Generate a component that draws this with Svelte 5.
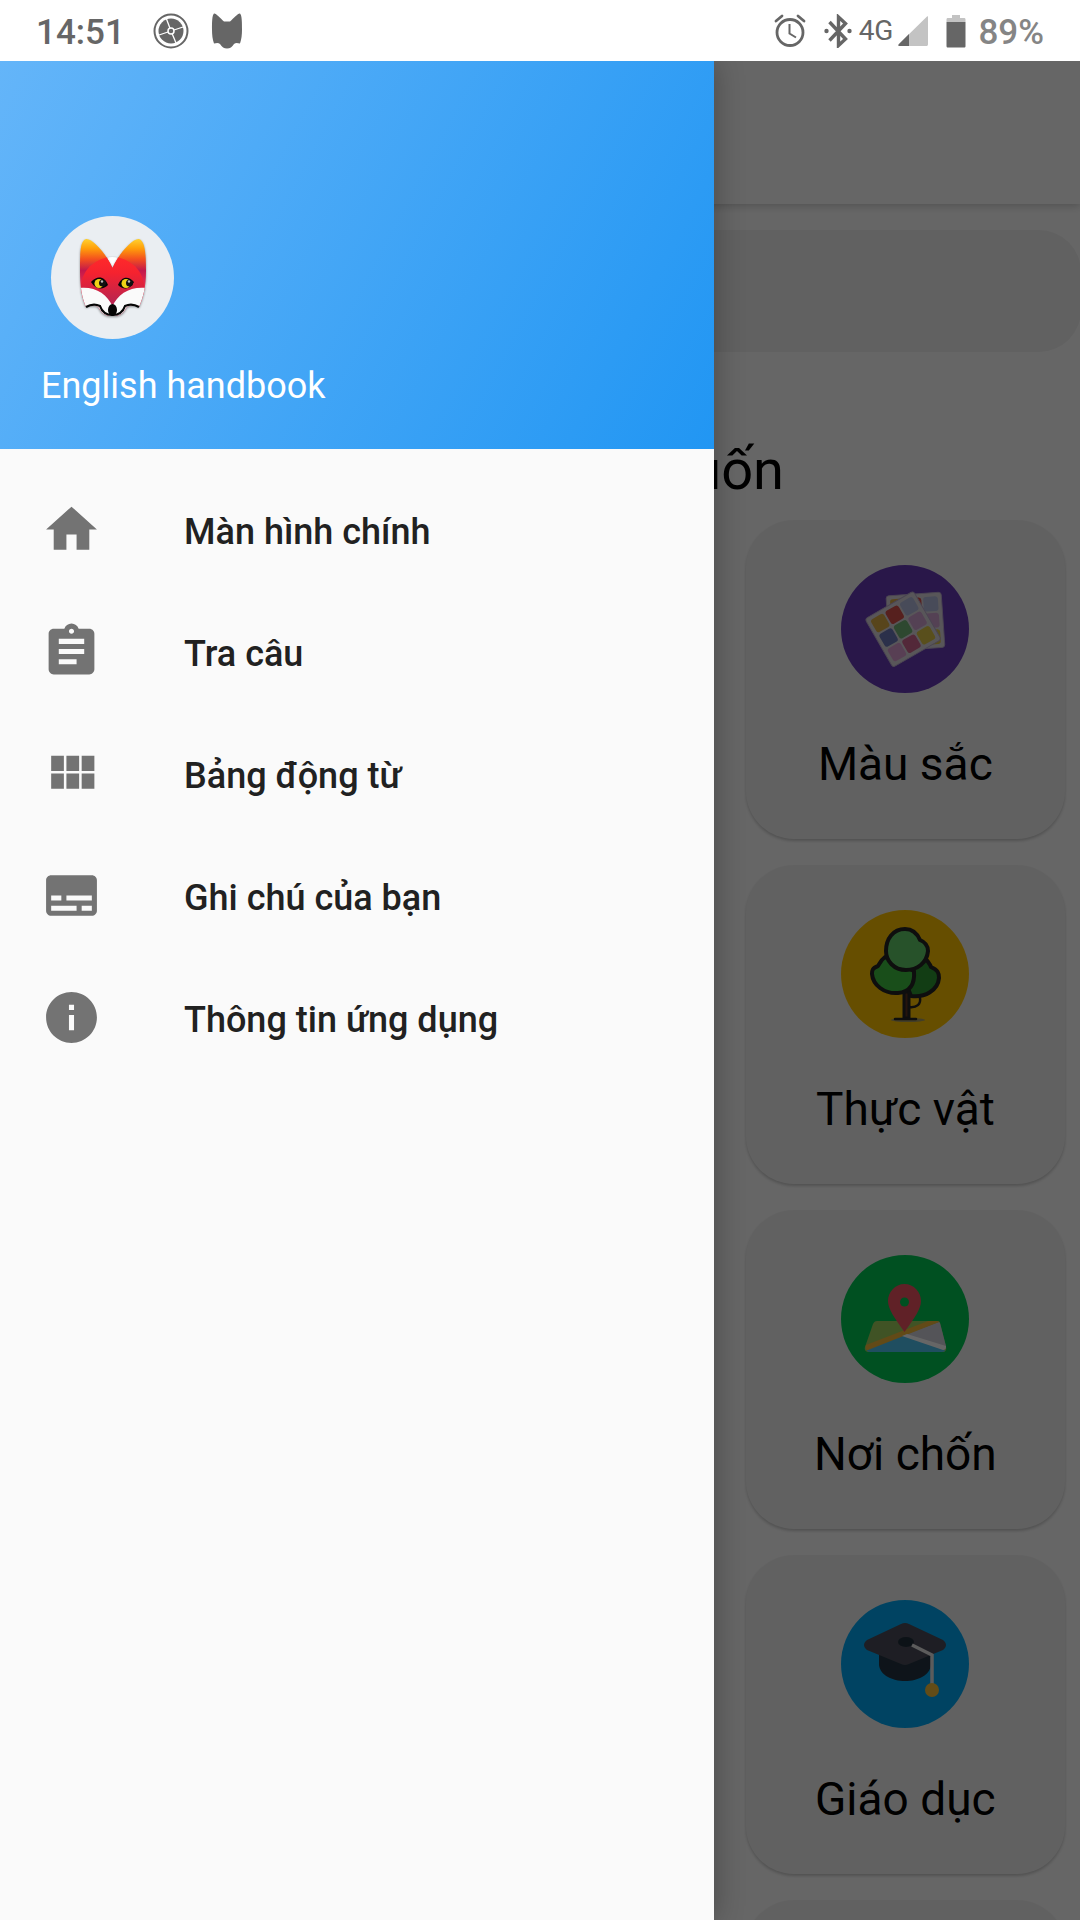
<script>
  const menu = [
    { icon: 'home', label: 'Màn hình chính' },
    { icon: 'clipboard', label: 'Tra câu' },
    { icon: 'grid', label: 'Bảng động từ' },
    { icon: 'subtitles', label: 'Ghi chú của bạn' },
    { icon: 'info', label: 'Thông tin ứng dụng' }
  ];

  const paths = {
    home: 'M10 20v-6h4v6h5v-8h3L12 3 2 12h3v8z',
    clipboard:
      'M19 3h-4.18C14.4 1.84 13.3 1 12 1c-1.3 0-2.4.84-2.82 2H5c-1.1 0-2 .9-2 2v14c0 1.1.9 2 2 2h14c1.1 0 2-.9 2-2V5c0-1.1-.9-2-2-2zm-7 0c.55 0 1 .45 1 1s-.45 1-1 1-1-.45-1-1 .45-1 1-1zm2 14H7v-2h7v2zm3-4H7v-2h10v2zm0-4H7V7h10v2z',
    grid: 'M4 11h5V5H4v6zm0 7h5v-6H4v6zm6 0h5v-6h-5v6zm6 0h5v-6h-5v6zm-6-7h5V5h-5v6zm6-6v6h5V5h-5z',
    subtitles:
      'M20 4H4c-1.1 0-2 .9-2 2v12c0 1.1.9 2 2 2h16c1.1 0 2-.9 2-2V6c0-1.1-.9-2-2-2zM4 12h4v2H4v-2zm10 6H4v-2h10v2zm6 0h-4v-2h4v2zm0-4H10v-2h10v2z',
    info: 'M12 2C6.48 2 2 6.48 2 12s4.48 10 10 10 10-4.48 10-10S17.52 2 12 2zm1 15h-2v-6h2v6zm0-8h-2V7h2v2z'
  };

  const topics = [
    { kind: 'colors', label: 'Màu sắc' },
    { kind: 'plants', label: 'Thực vật' },
    { kind: 'places', label: 'Nơi chốn' },
    { kind: 'education', label: 'Giáo dục' }
  ];

  const swatches = ['#dcac48', '#d8504c', '#b4bbdf', '#6c79b8', '#74b478', '#d3a3d3', '#dd9fd3', '#cf6490', '#dfc548'];
</script>

{#snippet palette()}
  <rect width="60" height="60" rx="3" fill="#dcd8de" stroke="#b9a9cc" stroke-width="1" />
  {#each swatches as color, i}
    <rect x={4 + (i % 3) * 18} y={4 + Math.floor(i / 3) * 18} width="16" height="16" rx="3" fill={color} />
  {/each}
{/snippet}

<div class="screen">
  <header class="status">
    <div class="status-group">
      <span class="clock">14:51</span>
      <svg class="wheel" viewBox="0 0 36 36" aria-hidden="true">
        <circle cx="18" cy="18" r="16.5" fill="none" stroke="#666" stroke-width="2" />
        <circle cx="18" cy="18" r="12.5" fill="#666" />
        <path d="M18 18 13.500 6M18 18l12-4M18 18l5 12M18 18 6 22" stroke="#fff" stroke-width="1.3" />
        <circle cx="18" cy="18" r="3" fill="#666" stroke="#fff" stroke-width="1.5" />
      </svg>
      <svg class="fox-mark" viewBox="0 0 32 36" aria-hidden="true">
        <path d="M3 .5C5 0 9 5 13 8.500h6C23 5 27 0 29 .5c2 2 2 9 2 16 0 5-.5 10-2 14-3-.8-4.500-.8-6 .5-2 3-4 4.500-7 4.500s-5-1.500-7-4.500c-1.500-1.300-3-1.300-6-.5-1.500-4-2-9-2-14 0-7 0-14 2-16z" fill="#666" />
      </svg>
    </div>
    <div class="status-group">
      <svg class="alarm" viewBox="0 0 32 34" fill="none" stroke="#666" stroke-width="2.800" aria-hidden="true">
        <circle cx="16" cy="18.500" r="13" />
        <path d="M15.500 10v9.500l6.500 4" stroke-width="2" />
        <path d="m2 7 6-5M30 7l-6-5" stroke-linecap="round" />
      </svg>
      <svg class="bluetooth" viewBox="0 0 28 34" aria-hidden="true">
        <path d="m5.500 8 16 17-7 6.500V3l7 6.500-16 17" fill="none" stroke="#666" stroke-width="3.400" />
        <circle cx="2.500" cy="17" r="2.200" fill="#666" />
        <circle cx="25.500" cy="17" r="2.200" fill="#666" />
      </svg>
      <span class="network">4G</span>
      <svg class="signal" viewBox="0 0 30 30" aria-hidden="true">
        <path d="M29 .5 1 28c-1 1-1 2 .5 2H28c1.500 0 2-.5 2-2V1c0-1-.5-1-1-.5z" fill="#c3c3c3" />
        <path d="M11 18 1 28c-1 1-1 2 .5 2H11z" fill="#666" />
      </svg>
      <svg class="battery" viewBox="0 0 20 34" aria-hidden="true">
        <path d="M6 1h8v3h4c1 0 1.500.5 1.500 1.500V8H.5V5.500C.5 4.500 1 4 2 4h4z" fill="#c3c3c3" />
        <path d="M.5 8h19v24c0 1-.5 1.500-1.500 1.500H2c-1 0-1.500-.5-1.500-1.500z" fill="#666" />
      </svg>
      <span class="percent">89%</span>
    </div>
  </header>

  <div class="stage">
    <main class="page">
      <div class="toolbar"></div>
      <div class="search"><input type="search" aria-label="Tìm kiếm" /></div>
      <h1>muốn</h1>
      <div class="topics">
        {#each topics as topic}
          <button class="topic">
            <span class="badge {topic.kind}">
              <svg viewBox="0 0 128 128" aria-hidden="true">
                {#if topic.kind === 'colors'}
                  <g transform="translate(45 31) rotate(-4) scale(.92)">{@render palette()}</g>
                  <g transform="translate(24 54) rotate(-30) scale(.93)">{@render palette()}</g>
                {:else if topic.kind === 'plants'}
                  <ellipse cx="67" cy="110" rx="17" ry="2" fill="#a69b65" />
                  <g stroke="#252323" stroke-width="4" stroke-linejoin="round" stroke-linecap="round">
                    <path d="M68 97c8 1 12-3 11-9" fill="none" stroke-width="2.500" />
                    <path d="M63 82h5v26h-5z" fill="#5d3422" stroke-width="3" />
                    <path d="M54 109h21" stroke-width="2.500" />
                    <path d="M85 49c2 3 4 5 5 8 7 3 8 6 8 11-1 12-14 20-28 18l-8-20 14-14z" fill="#2e9932" />
                    <path d="M44 47c-4 3-5 6-7 9-6 2-6 5-6 8 1 11 12 20 26 19 12-1 17-9 16-22z" fill="#3fc242" />
                    <path d="M64 19c-12 0-19 10-19 22 0 10 8 19 20 19 11 0 21-7 22-19 0-5-3-9-8-11-3-7-8-11-15-11z" fill="#62ce6a" />
                  </g>
                {:else if topic.kind === 'places'}
                  <path d="M36 66h60c2 0 3 1 3 2l6 24c1 3-1 5-3 5H28c-3 0-5-2-4-5l8-23c1-2 2-3 4-3z" fill="#a1cf5c" />
                  <path d="M98 67 63 80l41 14c1-1 1-2 1-3l-6-23z" fill="#d1d1db" />
                  <path d="m63 79-37 16c0 1 1 2 3 2h72c2 0 3-1 3-2z" fill="#4fc3ef" />
                  <path d="m25 90 62-24h9c2 0 3 1 2 1L27 95c-2 0-3-2-2-5z" fill="#f4b83a" />
                  <path d="m61 81 5-2 39 12c0 3-1 4-3 4z" fill="#fff" />
                  <path d="M63.500 29C54 29 47 37 47 46c0 8 6 16 16.500 31C74 62 80 54 80 46c0-9-7-17-16.500-17z" fill="#ef5361" />
                  <circle cx="63.500" cy="47" r="4.500" fill="#00c853" />
                {:else}
                  <path d="M38 51v14c1 10 13 16 26 16s25-6 26-16V51z" fill="#233442" />
                  <path d="m60 24-34 16c-4 3-4 7 0 10l34 14q4 2 8 0l34-14c4-3 4-7 0-10L68 24q-4-2-8 0z" fill="#4b4d5a" />
                  <ellipse cx="65" cy="42" rx="8" ry="5" fill="#202e3b" />
                  <path d="m71 45 20 10v30" fill="none" stroke="#e5e5e5" stroke-width="3.500" />
                  <circle cx="91" cy="90" r="7" fill="#f6be3b" />
                {/if}
              </svg>
            </span>
            <span class="topic-label">{topic.label}</span>
          </button>
        {/each}
        <button class="topic" aria-label="Chủ đề"></button>
      </div>
    </main>

    <div class="scrim"></div>

    <aside class="drawer">
      <div class="profile">
        <div class="avatar">
          <svg viewBox="0 0 123 123" aria-hidden="true">
            <defs>
              <linearGradient id="ear" x1="0" y1="0" x2="0" y2="1">
                <stop offset="0" stop-color="#ffe13c" />
                <stop offset=".15" stop-color="#ff9f0a" />
                <stop offset=".28" stop-color="#f4511e" />
                <stop offset=".42" stop-color="#c2184b" />
                <stop offset=".65" stop-color="#f3324b" />
              </linearGradient>
              <linearGradient id="face" x1="0" y1="0" x2="0" y2="1">
                <stop offset="0" stop-color="#ff2a2a" />
                <stop offset=".25" stop-color="#f5222f" />
                <stop offset=".8" stop-color="#ad2456" />
              </linearGradient>
              <clipPath id="head">
                <path d="M35 23c6-1 20 14 26.500 29C68 37 82 22 88 23c6 2 7 14 7 32 0 16-3 27-7 36-6-2-10-2-13 1-2 5-6 8-13.500 8S50 97 48 92c-3-3-7-3-13-1-4-9-6-20-6-36 0-18 0-30 6-32z" />
              </clipPath>
            </defs>
            <path d="M53 43q8-5 17 0l-8.500 12z" fill="#fff" stroke="#c9cdd0" stroke-width=".5" />
            <g class="head">
              <g clip-path="url(#head)">
                <rect x="28" y="20" width="68" height="82" fill="url(#ear)" />
                <circle cx="61.500" cy="73" r="32" fill="url(#face)" />
                <path d="M28 72c16-2 28 6 33.500 18C67 78 79 70 96 72v32H28z" fill="#fafafa" />
              </g>
            </g>
            <path d="M35 91c5-3 10-3 14-1 2 6 6 9 12.500 9S72 96 74 90c4-2 9-2 14 1" fill="none" stroke="#050505" stroke-width="2.200" />
            <ellipse cx="61.500" cy="94" rx="4.500" ry="6" fill="#050505" />
            <path d="M40 66c6-7 14-6 17 3-5 5-12 5-17-3zM83 66c-6-7-13-5-16 3 5 5 12 5 16-3z" fill="#050505" />
            <ellipse cx="48" cy="67.500" rx="4.500" ry="4.500" fill="#f0d216" />
            <ellipse cx="75" cy="67.500" rx="4.500" ry="4.500" fill="#f0d216" />
            <circle cx="51.500" cy="67" r="3.500" fill="#111" />
            <circle cx="78.500" cy="67" r="3.500" fill="#111" />
            <circle cx="51" cy="65.500" r="1.200" fill="#bbb" />
            <circle cx="78" cy="65.500" r="1.200" fill="#bbb" />
          </svg>
        </div>
        <p>English handbook</p>
      </div>
      <nav>
        {#each menu as item}
          <button class="item">
            <svg viewBox="0 0 24 24" aria-hidden="true"><path d={paths[item.icon]} /></svg>
            <span>{item.label}</span>
          </button>
        {/each}
      </nav>
    </aside>
  </div>
</div>

<style>
  :global(body) {
    margin: 0;
    background: #fff;
  }

  .screen {
    display: flex;
    flex-direction: column;
    height: 100vh;
    overflow: hidden;
    font-family: Roboto, 'Noto Sans', sans-serif;
  }

  button {
    border: 0;
    padding: 0;
    background: none;
    font: inherit;
    color: inherit;
  }

  .status {
    display: flex;
    flex: none;
    justify-content: space-between;
    align-items: center;
    height: 61px;
    padding: 0 36px;
    box-sizing: border-box;
    background: #fff;
    color: #666;
  }

  .status-group {
    display: flex;
    align-items: center;
  }

  .clock,
  .percent {
    padding-top: 4px;
    font-size: 35px;
    font-weight: 500;
    line-height: 42px;
  }

  .wheel {
    width: 36px;
    height: 36px;
    margin-left: 28px;
  }

  .fox-mark {
    width: 32px;
    height: 36px;
    margin-left: 22px;
  }

  .alarm {
    width: 32px;
    height: 34px;
  }

  .bluetooth {
    width: 28px;
    height: 34px;
    margin-left: 18px;
  }

  .network {
    margin-left: 7px;
    font-size: 28px;
    line-height: 36px;
  }

  .signal {
    width: 30px;
    height: 30px;
    margin-left: 5px;
  }

  .battery {
    width: 20px;
    height: 34px;
    margin-left: 18px;
  }

  .percent {
    margin-left: 12px;
    color: #858585;
  }

  .stage {
    position: relative;
    flex: 1;
    min-height: 0;
    overflow: hidden;
  }

  .page {
    height: 100%;
    overflow: hidden;
    background: #fff;
  }

  .toolbar {
    height: 143px;
    box-shadow: 0 2px 8px rgba(0, 0, 0, 0.2);
  }

  .search {
    height: 122px;
    margin: 26px -1px 0 20px;
  }

  .search input {
    width: 100%;
    height: 100%;
    border: 0;
    border-radius: 42px;
    padding: 0 48px;
    box-sizing: border-box;
    background: #f3f3f3;
    font-size: 46px;
  }

  h1 {
    margin: 85px 0 0;
    padding-right: 296px;
    font-size: 56px;
    font-weight: 400;
    line-height: 66px;
    text-align: right;
  }

  .topics {
    display: grid;
    grid-template-columns: repeat(3, 1fr);
    gap: 26px 46px;
    padding: 17px 15px 0;
  }

  .topic {
    display: flex;
    grid-column: 3;
    flex-direction: column;
    align-items: center;
    min-height: 319px;
    padding-top: 45px;
    box-sizing: border-box;
    border-radius: 48px;
    background: #f3f3f3;
    box-shadow: 0 2px 3px rgba(0, 0, 0, 0.2);
  }

  .badge {
    width: 128px;
    height: 128px;
    border-radius: 50%;
  }

  .badge svg {
    display: block;
  }

  .colors { background: #673ab7; }
  .plants { background: #ffc400; }
  .places { background: #00c853; }
  .education { background: #00a9f4; }

  .topic-label {
    margin-top: 44px;
    color: #000;
    font-size: 46px;
    line-height: 54px;
  }

  .scrim {
    position: absolute;
    inset: 0;
    background: rgba(0, 0, 0, 0.6);
  }

  .drawer {
    position: absolute;
    top: 0;
    bottom: 0;
    left: 0;
    width: 714px;
    max-width: 85vw;
    background: #fafafa;
    box-shadow: 0 0 28px rgba(0, 0, 0, 0.3);
  }

  .profile {
    height: 388px;
    padding: 155px 41px 0;
    box-sizing: border-box;
    background: linear-gradient(118deg, #64b5f9, #2196f3);
    color: #fff;
  }

  .avatar {
    width: 123px;
    height: 123px;
    margin-left: 10px;
    border-radius: 50%;
    background: #eaeef2;
  }

  .avatar svg {
    display: block;
  }

  .head {
    filter: drop-shadow(0 1px 1px rgba(0, 0, 0, 0.4));
  }

  .profile p {
    margin: 26px 0 0;
    font-size: 36px;
    line-height: 42px;
  }

  nav {
    padding-top: 19px;
  }

  .item {
    display: flex;
    align-items: center;
    width: 100%;
    height: 122px;
    padding: 0 41px;
    color: #212121;
    font-size: 36px;
    font-weight: 500;
    line-height: 42px;
  }

  .item span {
    padding-top: 6px;
  }

  .item svg {
    width: 61px;
    height: 61px;
    margin-right: 82px;
    fill: #737373;
  }
</style>
